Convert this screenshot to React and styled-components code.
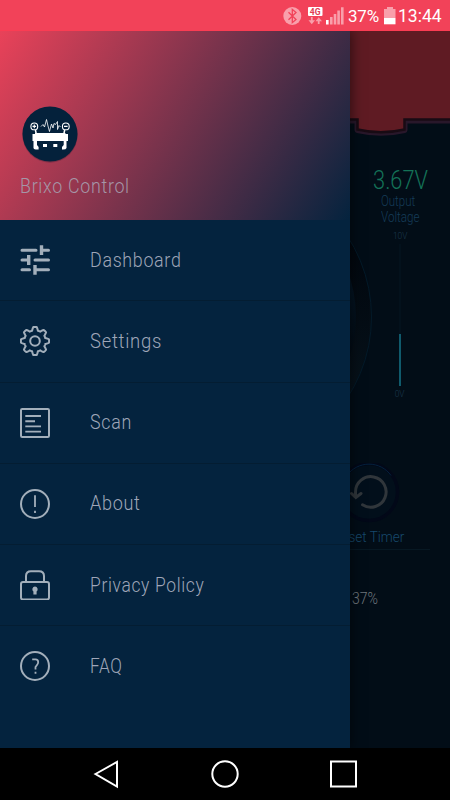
import styled, { createGlobalStyle } from "styled-components";

const GlobalStyle = createGlobalStyle`
  * {
    box-sizing: border-box;
  }
  body {
    margin: 0;
    background-color: #000;
    font-family: Roboto, "Liberation Sans", sans-serif;
  }
  svg {
    display: block;
    flex-shrink: 0;
  }
`

const Phone = styled.div`
  display: flex;
  flex-direction: column;
  width: 450px;
  height: 800px;
  overflow: hidden;
`

const StatusBar = styled.div`
  display: flex;
  align-items: center;
  height: 31px;
  padding-left: 283px;
  background-color: #f24259;
  border-bottom: 1px solid #fb3c53;
  color: #fff;
`

const StatusText = styled.span`
  width: ${p => p.$width}px;
  font-size: ${p => p.$size}px;
  line-height: 30px;
  letter-spacing: ${p => p.$spacing || 0}px;
  white-space: nowrap;
  padding-top: 2px;
`

const Screen = styled.div`
  position: relative;
  height: 717px;
  overflow: hidden;
  background-color: #020d17;
`

// squeezed light text, used for every label of the app
const Label = styled.span`
  display: block;
  width: max-content;
  font-size: ${p => p.$size}px;
  line-height: ${p => p.$line}px;
  font-weight: 300;
  color: ${p => p.$color};
  letter-spacing: ${p => p.$spacing || 0}px;
  white-space: nowrap;
  transform: scaleX(${p => p.$squeeze || 0.88});
  transform-origin: ${p => p.$origin || 'left'} center;
`

const Dashboard = styled.div`
  display: flex;
  flex-direction: column;
`

const GaugeRow = styled.div`
  display: flex;
  height: 325px;
  padding-left: 75px;
`

const Dial = styled.svg`
  margin-top: 30px;
`

const Gauge = styled.div`
  display: flex;
  flex-direction: column;
  align-items: center;
  width: 54px;
  padding-top: 30px;
`

const GaugeName = styled.div`
  align-self: flex-start;
  padding-left: 8px;
  margin-bottom: 5px;
`

const Track = styled.div`
  display: flex;
  flex-direction: column;
  justify-content: flex-end;
  width: 2px;
  height: 142px;
  margin: 2px 0;
  background-color: #03111c;
`

const Level = styled.div`
  background-color: #105a6c;
`

const ResetBox = styled.div`
  display: flex;
  flex-direction: column;
  align-items: center;
  width: 123px;
  margin-left: 307px;
  padding-bottom: 2px;
  border-bottom: 1px solid #071823;
`

const Battery = styled.div`
  padding: 39px 0 0 352px;
`

const Drawer = styled.div`
  position: absolute;
  top: 0;
  left: 0;
  width: 350px;
  height: 100%;
  background-color: #04233e;
  box-shadow: 0 0 12px 1px rgba(0, 0, 0, 0.55);
`

const DrawerHeader = styled.div`
  display: flex;
  flex-direction: column;
  height: 189px;
  padding: 73px 20px 0;
  background: linear-gradient(122deg, #e94259 0%, #04233e 100%);
`

const Menu = styled.div`
  display: flex;
  flex-direction: column;
`

const MenuItem = styled.div`
  display: flex;
  align-items: center;
  gap: 40px;
  height: 81.25px;
  padding: 0 20px;
  border-bottom: 1px solid ${p => p.$last ? 'transparent' : '#041d32'};

  ${Label} {
    margin-top: -1px;
  }
`

const NavBar = styled.div`
  display: flex;
  align-items: center;
  justify-content: space-between;
  height: 52px;
  padding: 0 93px 0 91px;
  background-color: #000;
`

const ICON = '#a3afbb'

const Icon = ({ children }) => (
  <svg width="30" height="30" viewBox="0 0 30 30" fill="none" stroke={ICON} strokeWidth="2">
    {children}
  </svg>
)

const gearPath = () => {
  const points = []
  for (let i = 0; i <= 160; i++) {
    const a = (i / 160) * Math.PI * 2
    const wave = Math.max(-1, Math.min(1, Math.cos(a * 8) * 1.7))
    const r = 12.4 + wave * 1.7
    points.push(`${(15 + r * Math.sin(a)).toFixed(2)} ${(15 - r * Math.cos(a)).toFixed(2)}`)
  }
  return `M${points.join('L')}Z`
}

const menuItems = [
  {
    name: 'Dashboard',
    squeeze: 0.85,
    icon: <g strokeWidth="3" strokeLinecap="round">
      <path d="M2 5.2H16M22 5.2H28.5M2 15H8M15 15H28.5M2 24.8H9.5M16 24.8H28.5" />
      <path strokeLinecap="butt" strokeWidth="3.4" d="M21.5 0.2V10M8.7 10V20M15 20V29.800" />
    </g>
  },
  {
    name: 'Settings',
    squeeze: 0.88,
    icon: <>
      <path d={gearPath()} strokeLinejoin="round" />
      <circle cx="15" cy="15" r="4.8" />
    </>
  },
  {
    name: 'Scan',
    squeeze: 0.85,
    icon: <>
      <rect x="1" y="1" width="28" height="28" rx="1.2" />
      <path strokeWidth="1.9" d="M5.3 8H21M5.3 13.2H15M5.3 18.4H21M5.3 23.6H21" />
    </>
  },
  {
    name: 'About',
    squeeze: 0.86,
    icon: <>
      <circle cx="15" cy="15" r="14" />
      <path strokeWidth="1.8" d="M15 6.3V18M15 21.7V24" />
    </>
  },
  {
    name: 'Privacy Policy',
    squeeze: 0.83,
    icon: <>
      <rect x="1" y="12" width="28" height="17.5" rx="2" />
      <path d="M6 12V6Q6 1.2 11 1.2H19Q24 1.2 24 6V12" />
      <path fill={ICON} stroke="none" d="M15 16.5a2.8 2.8 0 0 1 1.6 5V24.5H13.4V21.5A2.8 2.8 0 0 1 15 16.5Z" />
    </>
  },
  {
    name: 'FAQ',
    squeeze: 0.82,
    icon: <>
      <circle cx="15" cy="15" r="14" />
      <path strokeWidth="1.8" d="M12.2 8.3H15.5Q18.2 8.3 18.2 11Q18.2 12.6 17 14L15.5 16V18.4M15.5 20.7V22.8" />
    </>
  },
]

const StatusIcons = () => (
  <svg width="65" height="30" viewBox="283 0 65 30">
    <circle cx="292.3" cy="16" r="9" fill="#f99fab" />
    <path d="M288.5 12.3L296 19.5L292.3 22.7V9.3L296 12.5L288.5 19.7" fill="none" stroke="#f24259" strokeWidth="1.3" />
    <rect x="308" y="7" width="14.5" height="9" rx="1" fill="#fff" />
    <text x="315.2" y="14.6" fontSize="8.5" fontWeight="700" textAnchor="middle" fill="#e13c52">4G</text>
    <path d="M311.8 17V21.5M318.7 24V20" stroke="#f99fab" strokeWidth="1.8" />
    <path d="M308.5 20.2H315L311.8 24.2ZM315.5 21.3H322L318.7 17.2Z" fill="#f99fab" />
    <rect x="326" y="20" width="2.6" height="4.5" fill="#fff" />
    <path d="M330 17h2.6v7.5h-2.6zM333.7 14h2.6v10.5h-2.6zM337.3 10.5h2.6v14h-2.6zM341 7.3h2.6v17.2h-2.6z" fill="#f99fab" />
  </svg>
)

const BatteryIcon = () => (
  <svg width="14" height="30" viewBox="384 0 14 30">
    <path d="M387 7h6v2h2.5v9h-11.5v-9h3z" fill="#f99fab" />
    <rect x="384" y="18" width="11.5" height="6.3" fill="#fff" />
  </svg>
)

const Banner = () => (
  <svg width="450" height="107" viewBox="0 0 450 107">
    <path d="M-5 -5H455V89.5H404.5V99Q381 104.500 357.500 99V89.5H-5Z" fill="#5f1b23" stroke="#28172a" strokeWidth="6" strokeLinejoin="round" />
    <path d="M-5 -5H455V88.500H404.500V98.500Q381 104 357.500 98.500V88.500H-5Z" fill="#5f1b23" stroke="#180b14" strokeWidth="2.5" />
  </svg>
)

const Logo = () => (
  <svg width="60" height="62" viewBox="20 104 60 62">
    <circle cx="50" cy="135" r="27.700" fill="#3a1f35" opacity="0.35" />
    <circle cx="50" cy="134" r="27.5" fill="#04213b" />
    <g fill="none" stroke="#fff" strokeWidth="1.1">
      <circle cx="34.300" cy="126.400" r="3.400" />
      <circle cx="65.800" cy="126.400" r="3.400" />
      <path d="M32.500 126.400H36.100M34.300 124.600V128.200M64 126.400H67.600" />
      <path d="M35.400 130L36.500 135M64.700 130L63.600 135" strokeWidth="1.5" />
      <path strokeWidth="0.800" d="M41 126.500L43 124.500L44.500 127L46.500 119.500L48 126L49.500 131.500L51.500 124L53 128L54 123.500L55.500 124.500L57.500 121.500V129.500L59 125.500L60.500 127" />
    </g>
    <path fill="#fff" d="M32.500 134H35V133H65.500V134H68V141H66.500V148Q66 149.800 62 149.500V147L63.700 145V141H37V145L38.600 147V149.500Q34 149.800 33.500 148V141H32.500Z" />
    <path fill="#fff" d="M43 144h4v3h-4zM53.300 144h4v3h-4z" />
  </svg>
)

function App() {
  return (
    <Phone>
      <GlobalStyle />
      <StatusBar>
        <StatusIcons />
        <StatusText $width={36} $size={17} $spacing={-0.2}>37%</StatusText>
        <BatteryIcon />
        <StatusText $width={46} $size={17.5}>13:44</StatusText>
      </StatusBar>
      <Screen>
        <Dashboard>
          <Banner />
          <GaugeRow>
            <Dial width="298" height="298" viewBox="0 0 298 298">
              <defs>
                <linearGradient id="ring" x1="0" y1="0" x2="0" y2="1">
                  <stop offset="0.2" stopColor="#01060d" />
                  <stop offset="0.8" stopColor="#07131c" />
                </linearGradient>
                <linearGradient id="face" x1="0" y1="0" x2="0" y2="1">
                  <stop offset="0.3" stopColor="#041727" />
                  <stop offset="0.7" stopColor="#020a12" />
                </linearGradient>
              </defs>
              <circle cx="149" cy="149" r="147.500" fill="url(#ring)" stroke="#031a29" />
              <circle cx="149" cy="149" r="132" fill="url(#face)" />
            </Dial>
            <Gauge>
              <Label $size={25} $line={25} $color="#147257" $squeeze={0.87} $origin="center">3.67V</Label>
              <GaugeName>
                <Label $size={14} $line={16} $color="#153c57" $squeeze={0.82}>Output</Label>
                <Label $size={14} $line={16} $color="#153c57" $squeeze={0.83}>Voltage</Label>
              </GaugeName>
              <Label $size={9.5} $line={12} $color="#1b394e" $origin="center">10V</Label>
              <Track>
                <Level style={{ height: `${3.67 * 10}%` }} />
              </Track>
              <Label $size={9.5} $line={12} $color="#1b394e" $origin="center">0V</Label>
            </Gauge>
          </GaugeRow>
          <ResetBox>
            <svg width="64" height="64" viewBox="0 0 64 64" fill="none">
              <circle cx="32" cy="29" r="28.5" fill="#020f1b" stroke="#020818" strokeWidth="3.5" />
              <path d="M10 12.500A27 27 0 0 1 54 12.500" stroke="#04223e" />
              <path d="M25.500 41.800A15.300 15.300 0 1 0 18.500 29V34M14.500 30.500L18.800 34.500L24 30.500" stroke="#30363b" strokeWidth="3" strokeLinecap="round" />
            </svg>
            <Label $size={15} $line={20} $color="#17496c" $squeeze={0.9} $origin="center">Reset Timer</Label>
          </ResetBox>
          <Battery>
            <Label $size={16} $line={20} $color="#70777e" $squeeze={0.88}>37%</Label>
          </Battery>
        </Dashboard>
        <Drawer>
          <DrawerHeader>
            <Logo />
            <Label $size={20.5} $line={40} $color="#a596a7" $spacing={0.8} $squeeze={0.87}>Brixo Control</Label>
          </DrawerHeader>
          <Menu>
            {menuItems.map((item, index) => (
              <MenuItem key={item.name} $last={index === menuItems.length - 1}>
                <Icon>{item.icon}</Icon>
                <Label $size={21} $line={30} $color="#9fa6b8" $spacing={0.8} $squeeze={item.squeeze}>{item.name}</Label>
              </MenuItem>
            ))}
          </Menu>
        </Drawer>
      </Screen>
      <NavBar>
        <svg width="28" height="30" viewBox="0 0 28 30" fill="none" stroke="#fff" strokeWidth="2">
          <path d="M4.500 15L26 3V27.500Z" />
        </svg>
        <svg width="30" height="30" viewBox="0 0 30 30" fill="none" stroke="#fff" strokeWidth="2">
          <circle cx="16" cy="15" r="12.700" />
        </svg>
        <svg width="28" height="30" viewBox="0 0 28 30" fill="none" stroke="#fff" strokeWidth="2">
          <rect x="2" y="2.500" width="25" height="25" />
        </svg>
      </NavBar>
    </Phone>
  );
}

export default App;
